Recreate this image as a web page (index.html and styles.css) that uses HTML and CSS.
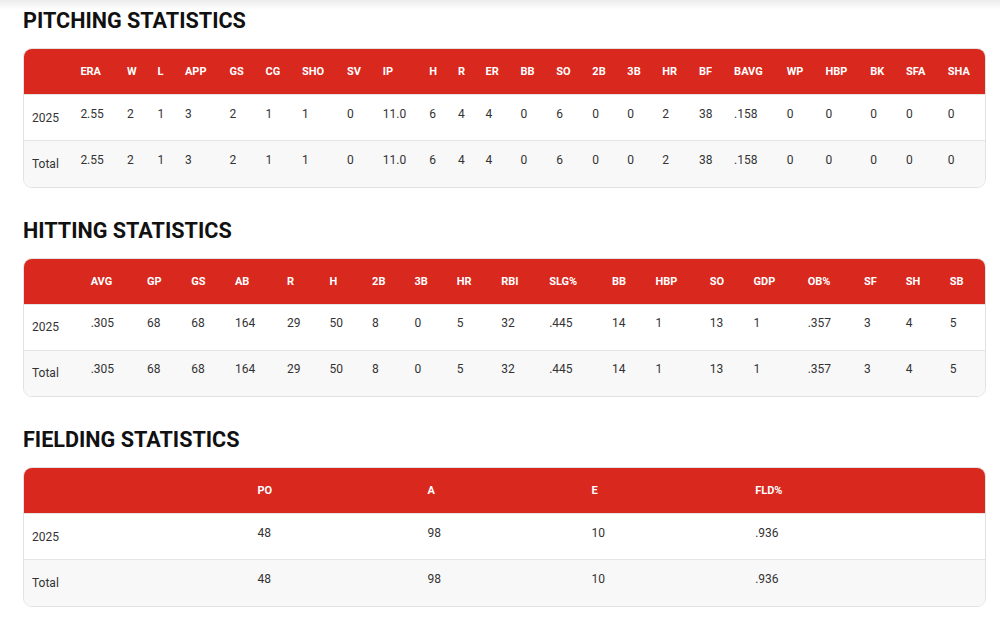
FILE: index.html
```html
<!DOCTYPE html>
<html lang="en">
<head>
<meta charset="utf-8">
<title>Statistics</title>
<link rel="stylesheet" href="styles.css">
</head>
<body>
<main class="page">
  <section class="stat-section">
    <h2 class="stat-title">PITCHING STATISTICS</h2>
    <div class="stat-card">
      <table class="stat-table">
        <thead>
          <tr><th class="label"></th><th>ERA</th><th>W</th><th>L</th><th>APP</th><th>GS</th><th>CG</th><th>SHO</th><th>SV</th><th>IP</th><th>H</th><th>R</th><th>ER</th><th>BB</th><th>SO</th><th>2B</th><th>3B</th><th>HR</th><th>BF</th><th>BAVG</th><th>WP</th><th>HBP</th><th>BK</th><th>SFA</th><th>SHA</th></tr>
        </thead>
        <tbody>
          <tr><td class="label">2025</td><td>2.55</td><td>2</td><td>1</td><td>3</td><td>2</td><td>1</td><td>1</td><td>0</td><td>11.0</td><td>6</td><td>4</td><td>4</td><td>0</td><td>6</td><td>0</td><td>0</td><td>2</td><td>38</td><td>.158</td><td>0</td><td>0</td><td>0</td><td>0</td><td>0</td></tr>
          <tr><td class="label">Total</td><td>2.55</td><td>2</td><td>1</td><td>3</td><td>2</td><td>1</td><td>1</td><td>0</td><td>11.0</td><td>6</td><td>4</td><td>4</td><td>0</td><td>6</td><td>0</td><td>0</td><td>2</td><td>38</td><td>.158</td><td>0</td><td>0</td><td>0</td><td>0</td><td>0</td></tr>
        </tbody>
      </table>
    </div>
  </section>

  <section class="stat-section">
    <h2 class="stat-title">HITTING STATISTICS</h2>
    <div class="stat-card">
      <table class="stat-table">
        <thead>
          <tr><th class="label"></th><th>AVG</th><th>GP</th><th>GS</th><th>AB</th><th>R</th><th>H</th><th>2B</th><th>3B</th><th>HR</th><th>RBI</th><th>SLG%</th><th>BB</th><th>HBP</th><th>SO</th><th>GDP</th><th>OB%</th><th>SF</th><th>SH</th><th>SB</th></tr>
        </thead>
        <tbody>
          <tr><td class="label">2025</td><td>.305</td><td>68</td><td>68</td><td>164</td><td>29</td><td>50</td><td>8</td><td>0</td><td>5</td><td>32</td><td>.445</td><td>14</td><td>1</td><td>13</td><td>1</td><td>.357</td><td>3</td><td>4</td><td>5</td></tr>
          <tr><td class="label">Total</td><td>.305</td><td>68</td><td>68</td><td>164</td><td>29</td><td>50</td><td>8</td><td>0</td><td>5</td><td>32</td><td>.445</td><td>14</td><td>1</td><td>13</td><td>1</td><td>.357</td><td>3</td><td>4</td><td>5</td></tr>
        </tbody>
      </table>
    </div>
  </section>

  <section class="stat-section">
    <h2 class="stat-title">FIELDING STATISTICS</h2>
    <div class="stat-card">
      <table class="stat-table">
        <thead>
          <tr><th class="label"></th><th>PO</th><th>A</th><th>E</th><th>FLD%</th></tr>
        </thead>
        <tbody>
          <tr><td class="label">2025</td><td>48</td><td>98</td><td>10</td><td>.936</td></tr>
          <tr><td class="label">Total</td><td>48</td><td>98</td><td>10</td><td>.936</td></tr>
        </tbody>
      </table>
    </div>
  </section>
</main>
</body>
</html>
```

FILE: styles.css
```css
html, body {
  margin: 0;
  padding: 0;
}

body {
  background: linear-gradient(to bottom, #ececec 0px, #ffffff 10px) no-repeat, #ffffff;
  font-family: Roboto, "Liberation Sans", Arial, sans-serif;
  color: #333333;
}

.page {
  padding: 10px 14px 0 23px;
  display: flex;
  flex-direction: column;
  gap: 32px;
}

.stat-section {
  display: flex;
  flex-direction: column;
  gap: 16px;
}

.stat-title {
  margin: 0;
  font-size: 21.6px;
  line-height: 22px;
  font-weight: 700;
  color: #111111;
  letter-spacing: 0;
}

.stat-card {
  border: 1px solid #e2e2e2;
  border-radius: 9px;
  overflow: hidden;
  background: #ffffff;
}

.stat-table {
  width: 100%;
  border-collapse: collapse;
  font-size: 12px;
}

.stat-table th {
  background: #d9281d;
  color: #ffffff;
  font-size: 11px;
  font-weight: 700;
  text-align: left;
  height: 45px;
  padding: 0 9px 0 8px;
  vertical-align: middle;
  white-space: nowrap;
}

.stat-table td {
  height: 46px;
  padding: 0 9px 8px 8px;
  text-align: left;
  vertical-align: middle;
  box-sizing: border-box;
  border-top: 1px solid #e4e4e4;
  white-space: nowrap;
}

.stat-table th.label,
.stat-table td.label {
  padding-right: 7px;
}

.stat-table td.label {
  padding-bottom: 0;
  padding-top: 0;
}

.stat-table tbody tr:nth-child(2) td {
  background: #f8f8f8;
}
```
